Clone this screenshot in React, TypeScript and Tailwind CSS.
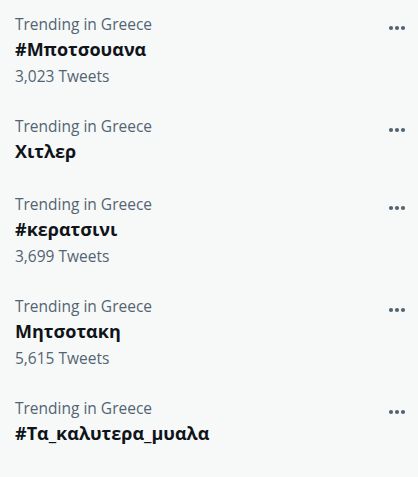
const trends = [
  { name: "#Μποτσουανα", tweets: "3,023 Tweets" },
  { name: "Χιτλερ" },
  { name: "#κερατσινι", tweets: "3,699 Tweets" },
  { name: "Μητσοτακη", tweets: "5,615 Tweets" },
  { name: "#Τα_καλυτερα_μυαλα" },
];

function MoreIcon() {
  return (
    <svg width="20" height="20" viewBox="0 0 20 20" className="fill-[#536471]">
      <circle cx="4" cy="10" r="2.1" />
      <circle cx="10" cy="10" r="2.1" />
      <circle cx="16" cy="10" r="2.1" />
    </svg>
  );
}

export default function App() {
  return (
    <div className="w-[418px] h-[477px] bg-[#f7f9f9] font-['Open_Sans',sans-serif]">
      {trends.map((t) => (
        <div
          key={t.name}
          className={
            t.tweets
              ? "flex justify-between pl-[15px] pr-[11px] pt-3 pb-3"
              : "flex justify-between pl-[15px] pr-[11px] pt-3 pb-4"
          }
        >
          <div className="flex flex-col">
            <span className="text-[15.5px] leading-[24px] text-[#536471]">Trending in Greece</span>
            <span className="text-[18px] leading-[26px] font-bold text-[#0f1419]">{t.name}</span>
            {t.tweets && (
              <span className="text-[15.5px] leading-[28px] text-[#536471]">{t.tweets}</span>
            )}
          </div>
          <div className="pt-[6px]">
            <MoreIcon />
          </div>
        </div>
      ))}
    </div>
  );
}
